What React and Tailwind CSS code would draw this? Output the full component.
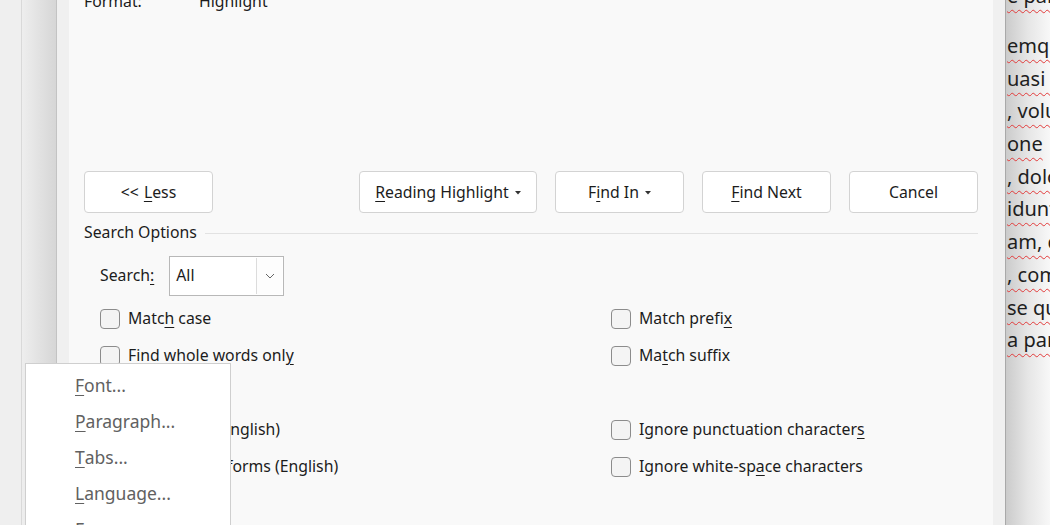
import React from 'react';

const LEFT_OPTIONS = [
  { pre: 'Matc', key: 'h', post: ' case' },
  { pre: 'Find whole words onl', key: 'y', post: '' },
  { pre: '', key: 'U', post: 'se wildcards' },
  { pre: 'Sounds li', key: 'k', post: 'e (English)' },
  { pre: 'Find all ', key: 'w', post: 'ord forms (English)' },
];

const RIGHT_OPTIONS = [
  { pre: 'Match prefi', key: 'x', post: '' },
  { pre: 'Ma', key: 't', post: 'ch suffix' },
  null,
  { pre: 'Ignore punctuation character', key: 's', post: '' },
  { pre: 'Ignore white-sp', key: 'a', post: 'ce characters' },
];

const MENU_ITEMS = [
  { key: 'F', rest: 'ont...' },
  { key: 'P', rest: 'aragraph...' },
  { key: 'T', rest: 'abs...' },
  { key: 'L', rest: 'anguage...' },
  { key: 'F', rest: 'rame...' },
];

const PAGE_LINES = [
  'emque', 'uasi a', ', volup', 'one', ', dolor', 'idunt', 'am, q', ', comm', 'se qua', 'a pari',
];

function Caret() {
  return (
    <svg width="6" height="4" viewBox="0 0 6 4" className="ml-[6px] mt-[1px]">
      <path d="M0 0 L6 0 L3 3.5 Z" fill="#333" />
    </svg>
  );
}

function Button({ width, children }) {
  return (
    <button
      className={`${width} h-[42px] flex items-center justify-center bg-white border border-[#d3d3d3] rounded-[4px] pt-[1px] text-[15.8px] text-[#1c1c1c]`}
    >
      {children}
    </button>
  );
}

function Option({ opt }) {
  if (!opt) return <div className="h-[37px]" />;
  return (
    <div className="h-[37px] flex items-center gap-[8px]">
      <span className="w-[20px] h-[20px] rounded-[4px] border border-[#8c8c8c] bg-[#f4f4f4] shrink-0" />
      <span className="text-[15.8px] text-[#1c1c1c] whitespace-nowrap">
        {opt.pre}<u className="underline-offset-[3px]">{opt.key}</u>{opt.post}
      </span>
    </div>
  );
}

export default function App() {
  return (
    <div className="relative flex w-[1050px] h-[525px] overflow-hidden bg-[#efefef] font-['Noto_Sans','Open_Sans',sans-serif]">
      {/* app background + shadow left of the dialog */}
      <div className="w-[22px] shrink-0 border-r border-[#d9d9d9]" />
      <div className="w-[34px] shrink-0 bg-linear-to-r from-[#eeeeee] to-[#d6d6d6]" />

      {/* Find and Replace dialog */}
      <div className="w-[949px] shrink-0 flex border-l border-[#c3c3c3] bg-[#f0f0f0] px-[12px]">
        <div className="flex-1 flex flex-col bg-[#f9f9f9] px-[15px]">
          <div className="mt-[-8px] h-[20px] flex items-center text-[15.8px] text-[#1c1c1c]">
            <span className="w-[115px]">Format:</span>
            <span>Highlight</span>
          </div>

          <div className="mt-[159px] flex items-center">
            <Button width="w-[129px]">
              &lt;&lt; <u className="ml-[5px] underline-offset-[3px]">L</u>ess
            </Button>
            <div className="flex-1" />
            <div className="flex gap-[18px]">
              <Button width="w-[178px]">
                <u className="underline-offset-[3px]">R</u>eading Highlight<Caret />
              </Button>
              <Button width="w-[129px]">
                F<u className="underline-offset-[3px]">i</u>nd In<Caret />
              </Button>
              <Button width="w-[129px]">
                <u className="underline-offset-[3px]">F</u>ind Next
              </Button>
              <Button width="w-[129px]">Cancel</Button>
            </div>
          </div>

          <div className="mt-[10px] h-[20px] flex items-center gap-[8px]">
            <span className="text-[15.8px] text-[#1c1c1c] whitespace-nowrap">Search Options</span>
            <div className="flex-1 h-px bg-[#e2e2e2]" />
          </div>

          <div className="mt-[13px] pl-[16px] h-[40px] flex items-center gap-[15px]">
            <span className="text-[15.8px] text-[#1c1c1c]">
              Search<u className="underline-offset-[3px]">:</u>
            </span>
            <div className="w-[115px] h-[40px] flex items-stretch bg-white border border-[#b8b8b8] p-[1px]">
              <span className="flex-1 flex items-center pl-[5px] text-[15.8px] text-[#1c1c1c]">All</span>
              <span className="w-[26px] flex items-center justify-center border-l border-[#dcdcdc] bg-[#fdfdfd]">
                <svg width="10" height="6" viewBox="0 0 10 6">
                  <path d="M1 1 L5 5 L9 1" fill="none" stroke="#666" strokeWidth="1" />
                </svg>
              </span>
            </div>
          </div>

          <div className="mt-[4px] pl-[16px] grid grid-cols-[511px_1fr]">
            <div className="flex flex-col">
              {LEFT_OPTIONS.map((o, i) => <Option key={i} opt={o} />)}
            </div>
            <div className="flex flex-col">
              {RIGHT_OPTIONS.map((o, i) => <Option key={i} opt={o} />)}
            </div>
          </div>
        </div>
      </div>

      {/* document page behind, shaded by the dialog's shadow */}
      <div className="flex-1 border-l border-[#a9a9a9] bg-linear-to-r from-[#cbcbcb] via-[#e6e6e6] to-[#f8f8f8] overflow-hidden">
        <div className="mt-[-21px] pl-[1px] text-[20px] leading-[33px] text-[#1e1e1e] whitespace-nowrap">
          <div className="h-[33px]">
            <span className="underline decoration-wavy decoration-1 decoration-[#e23b3b] underline-offset-[6px]">e par</span>
          </div>
          <div className="h-[17px]" />
          {PAGE_LINES.map((l, i) => (
            <div key={i} className="h-[32.7px]">
              <span className="underline decoration-wavy decoration-1 decoration-[#e23b3b] underline-offset-[6px]">{l}</span>
            </div>
          ))}
        </div>
      </div>

      {/* context menu over the dialog */}
      <div className="absolute left-[25px] top-[363px] w-[206px] h-[175px] bg-white border border-[#cfcfcf] pt-[3px]">
        {MENU_ITEMS.map((m, i) => (
          <div key={i} className="h-[36px] flex items-center pl-[49px] text-[17.5px] text-[#616161]">
            <u className="underline-offset-[3px]">{m.key}</u>{m.rest}
          </div>
        ))}
      </div>
    </div>
  );
}
